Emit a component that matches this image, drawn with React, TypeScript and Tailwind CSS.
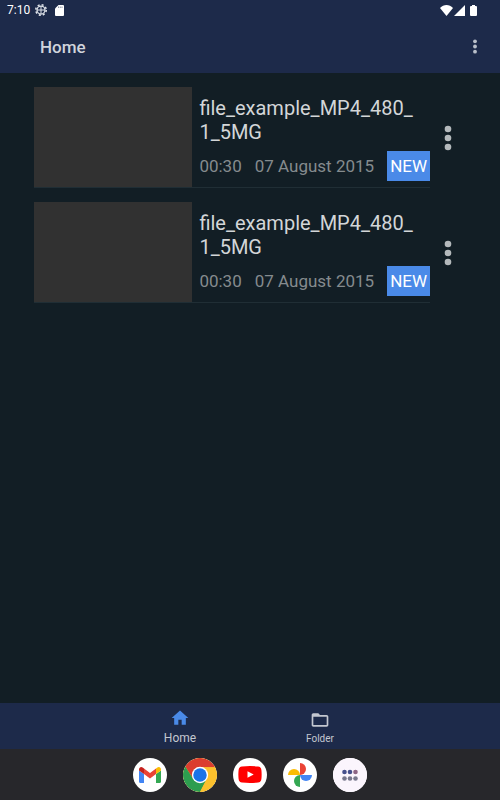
import { useState } from "react";
import type { ReactNode } from "react";

interface Video {
  id: number;
  name: string;
  duration: string;
  date: string;
  isNew: boolean;
}

const videos: Video[] = [
  {
    id: 1,
    name: "file_example_MP4_480_1_5MG",
    duration: "00:30",
    date: "07 August 2015",
    isNew: true,
  },
  {
    id: 2,
    name: "file_example_MP4_480_1_5MG",
    duration: "00:30",
    date: "07 August 2015",
    isNew: true,
  },
];

function MoreIcon({ className }: { className: string }) {
  return (
    <svg viewBox="0 0 8 26" className={className} fill="currentColor">
      <circle cx="4" cy="4" r="3.3" />
      <circle cx="4" cy="13" r="3.3" />
      <circle cx="4" cy="22" r="3.3" />
    </svg>
  );
}

function StatusBar() {
  return (
    <div className="flex h-5 items-center justify-between pl-[7px] pr-[23px] text-white">
      <div className="flex items-center">
        <span className="text-[12px] leading-5">7:10</span>
        <svg viewBox="0 0 24 24" className="ml-[5px] size-3" fill="none" stroke="#dfe3ea">
          <circle cx="12" cy="12" r="10.5" strokeWidth="3" strokeDasharray="4.1 4.15" />
          <circle cx="12" cy="12" r="8" strokeWidth="2.5" />
          <path d="M12 4v16M4 12h16" strokeWidth="2" />
        </svg>
        <svg viewBox="0 0 18 22" className="ml-2 h-[11px] w-[9px]">
          <path
            fill="white"
            d="M7 0h9a2 2 0 0 1 2 2v18a2 2 0 0 1-2 2H2a2 2 0 0 1-2-2V7z"
          />
          <path d="M7 3v3M10.500 3v3M14 3v3" stroke="#1c2a4a" strokeWidth="1" />
        </svg>
      </div>
      <div className="flex items-center" aria-label="Wi-Fi, signal and battery">
        <svg viewBox="0 0 26 22" className="h-[11px] w-[13px]" fill="white">
          <path d="M13 22 0 6C7-2 19-2 26 6z" />
        </svg>
        <svg viewBox="0 0 22 22" className="ml-px h-[11px] w-[11px]" fill="white">
          <path d="M22 0v22H0z" />
        </svg>
        <svg viewBox="0 0 14 22" className="ml-[5px] h-[11px] w-[7px]" fill="white">
          <path d="M4 0h6v2h2a2 2 0 0 1 2 2v16a2 2 0 0 1-2 2H2a2 2 0 0 1-2-2V4a2 2 0 0 1 2-2h2z" />
        </svg>
      </div>
    </div>
  );
}

function VideoRow({ video }: { video: Video }) {
  return (
    <li className="flex items-stretch">
      <div className="flex min-w-0 flex-1 border-b border-[#202e35]">
        <div className="w-2/5 shrink-0 bg-[#313131]" />
        <div className="min-w-0 flex-1 pl-[7px] pt-[9px] pb-[6px]">
          <h2 className="pr-3 text-[20px] leading-6 break-all text-[#d3d6d8]">
            {video.name}
          </h2>
          <div className="mt-[7px] flex items-center justify-between text-[17px] leading-[30px] whitespace-nowrap text-[#858b8e]">
            <span>{video.duration}</span>
            <span>{video.date}</span>
            {video.isNew && (
              <span className="bg-[#4a8ae8] px-[3px] text-white">NEW</span>
            )}
          </div>
        </div>
      </div>
      <button
        type="button"
        aria-label={`More options for ${video.name}`}
        className="flex w-9 items-center justify-center text-[#b4b9bc]"
      >
        <MoreIcon className="h-[26px] w-2" />
      </button>
    </li>
  );
}

function DockApp({ label, children }: { label: string; children: ReactNode }) {
  return (
    <button
      type="button"
      aria-label={label}
      className="flex size-[34px] items-center justify-center overflow-hidden rounded-full bg-white"
    >
      {children}
    </button>
  );
}

function Dock() {
  return (
    <div className="flex h-[51px] items-center justify-center gap-4 bg-[#27272b]">
      <DockApp label="Gmail">
        <svg viewBox="0 0 22 16" className="h-4 w-[22px]">
          <path fill="#4285f4" d="M0 3.500 5 7v9H1.500A1.500 1.500 0 0 1 0 14.500z" />
          <path fill="#34a853" d="M22 3.500 17 7v9h3.500a1.500 1.500 0 0 0 1.500-1.500z" />
          <path fill="#ea4335" d="M5 1.500 11 6l6-4.500V7l-6 4.500L5 7z" />
          <path fill="#c5221f" d="M0 2.500C0 .2 2.300-.6 4 .7l1 .8V7L0 3.500z" />
          <path fill="#fbbc04" d="M22 2.500C22 .2 19.700-.6 18 .7l-1 .8V7l5-3.500z" />
        </svg>
      </DockApp>
      <DockApp label="Chrome">
        <svg viewBox="0 0 48 48" className="size-[34px]">
          <circle cx="24" cy="24" r="24" fill="#fbc02d" />
          <path fill="#db3d2e" d="M3.200 12A24 24 0 0 1 44.800 12L45 13H24L14.500 29.500z" />
          <path fill="#2d9d4f" d="M3.200 12A24 24 0 0 0 24 48l9.500-18.500H14.500z" />
          <path fill="#fbc02d" d="M24 13h21.300A24 24 0 0 1 24 48l9.500-18.500z" />
          <circle cx="24" cy="24" r="11.500" fill="white" />
          <circle cx="24" cy="24" r="9.500" fill="#1a73e8" />
        </svg>
      </DockApp>
      <DockApp label="YouTube">
        <svg viewBox="0 0 24 17" className="h-[17px] w-6">
          <path
            fill="#f00"
            d="M4 .5Q12-.4 20 .5 23 .7 23.400 4q.5 4.500 0 9-.4 3.300-3.400 3.500-8 .9-16 0Q1 16.300.6 13q-.5-4.500 0-9Q1 .7 4 .5z"
          />
          <path fill="white" d="m9.500 5.200 6.200 3.300-6.200 3.300z" />
        </svg>
      </DockApp>
      <DockApp label="Photos">
        <svg viewBox="0 0 24 24" className="size-6">
          <path fill="#ea4335" d="M12 0a6 6 0 0 1 0 12z" />
          <path fill="#4285f4" d="M24 12a6 6 0 0 1-12 0z" />
          <path fill="#34a853" d="M12 24a6 6 0 0 1 0-12z" />
          <path fill="#fbbc04" d="M0 12a6 6 0 0 1 12 0z" />
        </svg>
      </DockApp>
      <DockApp label="All apps">
        <svg viewBox="0 0 34 34" className="size-[34px]">
          <rect width="34" height="34" fill="#fbf5fd" />
          <g fill="#46508c">
            <circle cx="11.500" cy="14" r="2.300" />
            <circle cx="17" cy="14" r="2.300" />
          </g>
          <circle cx="22.500" cy="14" r="2.300" fill="#8d6585" />
          <g fill="#77778c">
            <circle cx="11.500" cy="20.500" r="2.300" />
            <circle cx="17" cy="20.500" r="2.300" />
            <circle cx="22.500" cy="20.500" r="2.300" />
          </g>
        </svg>
      </DockApp>
    </div>
  );
}

export default function App() {
  const [tab, setTab] = useState("home");

  return (
    <div className="flex min-h-screen flex-col bg-[#121e25] font-['Roboto',sans-serif]">
      <header className="bg-[#1d2a4a]">
        <StatusBar />
        <div className="flex h-[53px] items-center justify-between pr-[21px] pl-10">
          <h1 className="pt-px text-[17px] leading-6 font-medium text-[#d0d4dc]">Home</h1>
          <button type="button" aria-label="More options" className="text-[#b9bfca]">
            <MoreIcon className="h-[15px] w-2" />
          </button>
        </div>
      </header>

      <main className="flex-1 px-[34px] pt-[14px]">
        <ul className="flex flex-col gap-[14px]">
          {videos.map((video) => (
            <VideoRow key={video.id} video={video} />
          ))}
        </ul>
      </main>

      {/* Bottom tabs */}
      <nav className="flex h-[46px] justify-center bg-[#1d2a4a] text-[#c3c7d0]">
        <button
          type="button"
          aria-current={tab === "home" ? "page" : undefined}
          onClick={() => setTab("home")}
          className="flex w-[140px] flex-col items-center pt-[5px] text-[12px] leading-5"
        >
          <svg
            viewBox="0 0 24 24"
            className={`size-5 ${tab === "home" ? "text-[#4a8ae8]" : ""}`}
            fill="currentColor"
          >
            <path d="M10 20v-6h4v6h5v-8h3L12 3 2 12h3v8z" />
          </svg>
          <span>Home</span>
        </button>
        <button
          type="button"
          aria-current={tab === "folder" ? "page" : undefined}
          onClick={() => setTab("folder")}
          className="flex w-[140px] flex-col items-center pt-[7px] text-[10px] leading-[18px]"
        >
          <svg
            viewBox="0 0 24 24"
            className={`size-5 ${tab === "folder" ? "text-[#4a8ae8]" : ""}`}
            fill="currentColor"
          >
            <path d="M20 6h-8l-2-2H4c-1.100 0-2 .9-2 2v12c0 1.100.9 2 2 2h16c1.100 0 2-.9 2-2V8c0-1.100-.9-2-2-2zm0 12H4V8h16v10z" />
          </svg>
          <span>Folder</span>
        </button>
      </nav>

      <Dock />
    </div>
  );
}
